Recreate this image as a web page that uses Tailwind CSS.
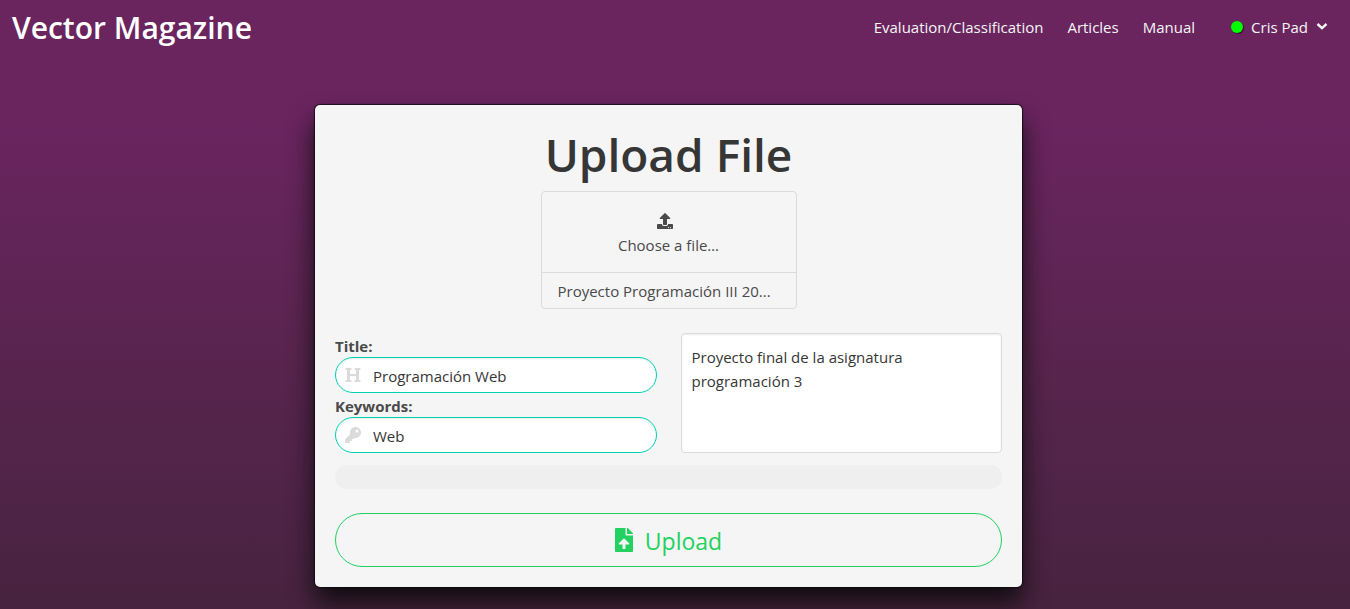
<!DOCTYPE html>
<html lang="en">
<head>
<meta charset="utf-8">
<meta name="viewport" content="width=device-width, initial-scale=1">
<title>Vector Magazine</title>
<script src="https://cdn.jsdelivr.net/npm/@tailwindcss/browser@4"></script>
</head>
<body class="min-h-screen bg-linear-to-b from-[#6a255f] from-20% to-[#47233f] font-['Open_Sans',sans-serif] text-[15px] leading-6 text-[#4a4a4a]">
<header class="flex items-center justify-between pl-3 pr-[22px] text-[#f5f5f5]">
  <a href="#" class="pt-[2px] text-[30px] leading-[52px] font-semibold text-white">Vector Magazine</a>
  <nav class="flex items-center gap-6" aria-label="Main">
    <a href="#">Evaluation/Classification</a>
    <a href="#">Articles</a>
    <a href="#">Manual</a>
    <button type="button" class="ml-3 flex items-center gap-2">
      <span class="size-3 rounded-full bg-[#00ff00] shadow-[1px_1px_1px_rgba(0,0,0,0.5)]"></span>
      <span>Cris Pad</span>
      <svg class="size-3" viewBox="0 0 12 12" fill="none" stroke="currentColor" stroke-width="2.4" aria-hidden="true"><path d="M1.500 3 6 7.200l4.500-4.200"/></svg>
    </button>
  </nav>
</header>
<main class="flex justify-center pt-[51px] pb-5 pl-3 pr-[25px]">
  <form class="w-full max-w-[707px] rounded-[5px] bg-[#f5f5f5] p-5 shadow-[0_0_1px_1px_rgba(10,10,10,0.8),0_16px_26px_rgba(10,10,10,0.9)]">
    <h1 class="text-center text-[46px] leading-[58px] font-semibold text-[#363636]">Upload File</h1>
    <label class="mx-auto mt-2 block w-64 cursor-pointer rounded border border-[#dbdbdb] text-center">
      <input type="file" class="sr-only">
      <span class="flex h-20 flex-col items-center justify-center gap-1 pt-[6px]">
        <svg class="mr-2 size-4" viewBox="0 0 512 512" fill="currentColor" aria-hidden="true"><path d="M296 384h-80c-13.3 0-24-10.7-24-24V192h-87.7c-17.8 0-26.7-21.5-14.1-34.1L242.3 5.7c7.5-7.5 19.8-7.5 27.3 0l152.2 152.2c12.6 12.6 3.7 34.1-14.1 34.1H320v168c0 13.3-10.7 24-24 24zm216-8v112c0 13.3-10.7 24-24 24H24c-13.3 0-24-10.7-24-24V376c0-13.3 10.7-24 24-24h136v8c0 30.9 25.1 56 56 56h80c30.9 0 56-25.1 56-56v-8h136c13.3 0 24 10.7 24 24zm-124 88c0-11-9-20-20-20s-20 9-20 20 9 20 20 20 20-9 20-20zm64 0c0-11-9-20-20-20s-20 9-20 20 9 20 20 20 20-9 20-20z"/></svg>
        <span>Choose a file…</span>
      </span>
      <span class="block border-t border-[#dbdbdb] px-4 pt-px text-left leading-[34px]">Proyecto Programación III 20...</span>
    </label>
    <div class="mt-6 grid grid-cols-2 gap-6">
      <div>
        <label for="title" class="block pt-[2px] leading-[22px] font-bold">Title:</label>
        <div class="flex h-9 items-center gap-3 rounded-full border border-[#00d1b2] bg-white px-[9px] shadow-[inset_0_1px_2px_rgba(10,10,10,0.08)]">
          <svg class="size-4 shrink-0 text-[#dbdbdb]" viewBox="0 0 512 512" fill="currentColor" aria-hidden="true"><path d="M448 96v320h32a16 16 0 0 1 16 16v32a16 16 0 0 1-16 16H320a16 16 0 0 1-16-16v-32a16 16 0 0 1 16-16h32V288H160v128h32a16 16 0 0 1 16 16v32a16 16 0 0 1-16 16H32a16 16 0 0 1-16-16v-32a16 16 0 0 1 16-16h32V96H32a16 16 0 0 1-16-16V48a16 16 0 0 1 16-16h160a16 16 0 0 1 16 16v32a16 16 0 0 1-16 16h-32v128h192V96h-32a16 16 0 0 1-16-16V48a16 16 0 0 1 16-16h160a16 16 0 0 1 16 16v32a16 16 0 0 1-16 16z"/></svg>
          <input id="title" type="text" value="Programación Web" class="w-full min-w-0 bg-transparent pt-[2px] text-[#363636] outline-none">
        </div>
        <label for="keywords" class="block pt-[2px] leading-[22px] font-bold">Keywords:</label>
        <div class="flex h-9 items-center gap-3 rounded-full border border-[#00d1b2] bg-white px-[9px] shadow-[inset_0_1px_2px_rgba(10,10,10,0.08)]">
          <svg class="size-4 shrink-0 text-[#dbdbdb]" viewBox="0 0 512 512" fill="currentColor" aria-hidden="true"><path d="M512 176.001C512 273.203 433.202 352 336 352c-11.22 0-22.19-1.062-32.827-3.069l-24.012 27.014A23.999 23.999 0 0 1 261.223 384H224v40c0 13.255-10.745 24-24 24h-40v40c0 13.255-10.745 24-24 24H24c-13.255 0-24-10.745-24-24v-78.059c0-6.365 2.529-12.47 7.029-16.971l161.802-161.802C163.108 213.814 160 195.271 160 176 160 78.798 238.797.001 335.999 0 433.488-.001 512 78.511 512 176.001zM336 128c0 26.51 21.49 48 48 48s48-21.49 48-48-21.49-48-48-48-48 21.49-48 48z"/></svg>
          <input id="keywords" type="text" value="Web" class="w-full min-w-0 bg-transparent pt-[2px] text-[#363636] outline-none">
        </div>
      </div>
      <textarea aria-label="Description" class="block h-[120px] w-full resize-none rounded border border-[#dbdbdb] bg-white px-[10px] py-[11px] text-[#363636] shadow-[inset_0_1px_2px_rgba(10,10,10,0.08)] outline-none">Proyecto final de la asignatura programación 3</textarea>
    </div>
    <div role="progressbar" aria-label="Upload progress" aria-valuenow="0" aria-valuemin="0" aria-valuemax="100" class="mt-3 h-6 rounded-full bg-[#efefef]"></div>
    <button type="submit" class="mt-6 flex h-[54px] w-full items-center justify-center gap-3 rounded-full border border-[#23d160] text-[23px] text-[#23d160]">
      <svg class="h-6 w-[18px]" viewBox="0 0 384 512" fill="currentColor" aria-hidden="true"><path d="M224 136V0H24C10.700 0 0 10.700 0 24v464c0 13.300 10.700 24 24 24h336c13.300 0 24-10.700 24-24V160H248c-13.200 0-24-10.800-24-24zm65.180 216.010H224v80c0 8.840-7.160 16-16 16h-32c-8.840 0-16-7.160-16-16v-80H94.820c-14.280 0-21.410-17.290-11.270-27.360l96.420-95.700c6.650-6.610 17.390-6.610 24.040 0l96.420 95.700c10.150 10.070 3.030 27.360-11.250 27.360zM377 105L279.100 7c-4.500-4.500-10.600-7-17-7H256v128h128v-6.100c0-6.300-2.500-12.400-7-16.900z"/></svg>
      <span class="pt-[2px]">Upload</span>
    </button>
  </form>
</main>
</body>
</html>
